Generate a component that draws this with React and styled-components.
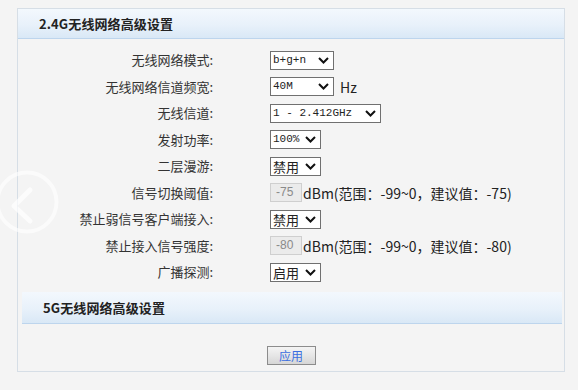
import React from "react";
import styled, { createGlobalStyle } from "styled-components";

const Global = createGlobalStyle`
  html, body { margin: 0; padding: 0; background: #f4f4f4; }
  body { font-family: "Noto Sans CJK SC", "Noto Sans", sans-serif; color: #333; }
`;

const Page = styled.div`
  position: relative;
  width: 578px;
  height: 390px;
  padding: 8px 0 0 17px;
  box-sizing: border-box;
  overflow: hidden;
`;

const Panel = styled.div`
  width: 548px;
  height: 364px;
  box-sizing: border-box;
  border: 1px solid #d6dee6;
  background: #f4f4f4;
  display: flex;
  flex-direction: column;
`;

const SectionHeader = styled.div`
  height: ${(p) => (p.$inset ? 31 : 29)}px;
  margin: ${(p) => (p.$inset ? "6px 2px 0 4px" : "0")};
  padding-left: 21px;
  display: flex;
  align-items: center;
  background: linear-gradient(to bottom, #f3f8fd 0%, #e8f1fa 55%, #d9e8f6 100%);
  border-bottom: 1px solid #bdd5ed;
  font-size: 13px;
  font-weight: bold;
  color: #222;
  letter-spacing: 0.1px;
`;

const Form = styled.div`
  display: grid;
  grid-template-columns: 195px auto;
  grid-auto-rows: 26.5px;
  column-gap: 57px;
  margin-top: 8px;
`;

const Label = styled.div`
  text-align: right;
  align-self: center;
  font-size: 13px;
  line-height: 16px;
  color: #333;
`;

const Field = styled.div`
  display: flex;
  align-items: center;
  gap: 6px;
  font-size: 13px;
  color: #222;
`;

const SelectBox = styled.div`
  width: ${(p) => p.$w}px;
  height: 19px;
  box-sizing: border-box;
  border: 1px solid #707070;
  background: #fff;
  display: flex;
  align-items: center;
  justify-content: space-between;
  padding: 0 4px 0 2px;
  font-family: ${(p) => (p.$mono ? '"Liberation Mono", "DejaVu Sans Mono", monospace' : '"Noto Sans CJK SC", sans-serif')};
  font-size: ${(p) => (p.$mono ? "11px" : "13px")};
  color: #222;
  line-height: 17px;
`;

const InputBox = styled.div`
  width: 32px;
  height: 19px;
  box-sizing: border-box;
  border: 1px solid #cfcfcf;
  background: #ebebeb;
  color: #8a8a8a;
  font-family: "Liberation Sans", sans-serif;
  font-size: 12px;
  line-height: 17px;
  padding-left: 5px;
`;

const Note = styled.span`
  font-size: 14px;
  color: #222;
  margin-left: -5px;
`;

const Unit = styled.span`
  font-size: 14px;
  color: #222;
`;

const ButtonRow = styled.div`
  display: flex;
  justify-content: center;
  margin-top: 22px;
`;

const ApplyButton = styled.div`
  width: 49px;
  height: 19px;
  box-sizing: border-box;
  border: 1px solid #8c8c8c;
  background: linear-gradient(to bottom, #f4f4f4 0%, #e6e6e6 50%, #d6d6d6 100%);
  color: #3a6ee0;
  font-size: 12px;
  line-height: 17px;
  text-align: center;
`;

const BackOverlay = styled.svg`
  position: absolute;
  left: -5px;
  top: 170px;
  width: 64px;
  height: 64px;
  pointer-events: none;
`;

const Chevron = () => (
  <svg width="11" height="7" viewBox="0 0 11 7">
    <path d="M1 1 L5.5 5.5 L10 1" fill="none" stroke="#111" strokeWidth="2" />
  </svg>
);

const Select = ({ w, mono, children }) => (
  <SelectBox $w={w} $mono={mono}>
    <span>{children}</span>
    <Chevron />
  </SelectBox>
);

const rows = [
  { label: "无线网络模式:", field: <Select w={64} mono>b+g+n</Select> },
  {
    label: "无线网络信道频宽:",
    field: (
      <>
        <Select w={64} mono>40M</Select>
        <Unit>Hz</Unit>
      </>
    ),
  },
  { label: "无线信道:", field: <Select w={111} mono>1 - 2.412GHz</Select> },
  { label: "发射功率:", field: <Select w={51} mono>100%</Select> },
  { label: "二层漫游:", field: <Select w={51}>禁用</Select> },
  {
    label: "信号切换阈值:",
    field: (
      <>
        <InputBox>-75</InputBox>
        <Note>dBm(范围：-99~0，建议值：-75)</Note>
      </>
    ),
  },
  { label: "禁止弱信号客户端接入:", field: <Select w={51}>禁用</Select> },
  {
    label: "禁止接入信号强度:",
    field: (
      <>
        <InputBox>-80</InputBox>
        <Note>dBm(范围：-99~0，建议值：-80)</Note>
      </>
    ),
  },
  { label: "广播探测:", field: <Select w={51}>启用</Select> },
];

export default function App() {
  return (
    <>
      <Global />
      <Page>
        <Panel>
          <SectionHeader>2.4G无线网络高级设置</SectionHeader>
          <Form>
            {rows.map((r, i) => (
              <React.Fragment key={i}>
                <Label>{r.label}</Label>
                <Field>{r.field}</Field>
              </React.Fragment>
            ))}
          </Form>
          <SectionHeader $inset>5G无线网络高级设置</SectionHeader>
          <ButtonRow>
            <ApplyButton>应用</ApplyButton>
          </ButtonRow>
        </Panel>
        <BackOverlay viewBox="0 0 64 64">
          <circle cx="32" cy="32" r="29.5" fill="none" stroke="rgba(255,255,255,0.6)" strokeWidth="4" />
          <path d="M35 20 L19 36 L35 51" fill="none" stroke="rgba(255,255,255,0.7)" strokeWidth="5" strokeLinecap="round" strokeLinejoin="round" />
        </BackOverlay>
      </Page>
    </>
  );
}
